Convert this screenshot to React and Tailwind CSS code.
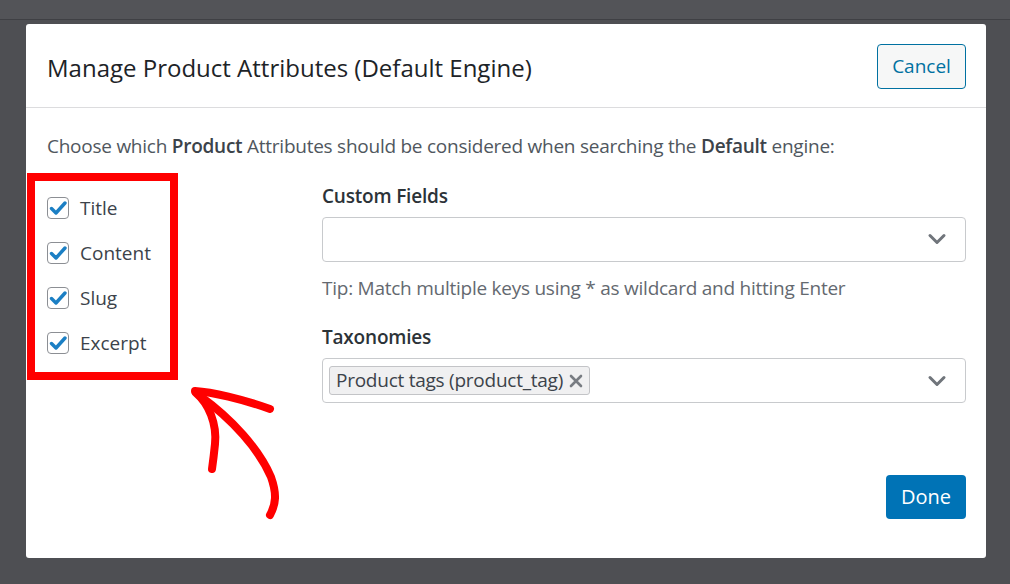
import { ChevronDown } from 'lucide-react';

const font = { fontFamily: '"Open Sans", "Noto Sans", sans-serif' };

const Checkbox = ({ label }) => (
  <label className="flex items-center gap-[11px] h-[45px]">
    <span className="w-[22px] h-[22px] rounded-[4px] border border-[#8c8f94] bg-white flex items-center justify-center">
      <svg width="18" height="18" viewBox="0 0 18 18">
        <path d="M2.5 9.5 L7 14 L16 4" fill="none" stroke="#1b7fc4" strokeWidth="3.4" strokeLinecap="round" strokeLinejoin="round" />
      </svg>
    </span>
    <span className="text-[19px] text-[#3c434a]">{label}</span>
  </label>
);

const SelectBox = ({ children }) => (
  <div className="h-[45px] border border-[#c8cacd] rounded-[4px] flex items-center pl-[6px] pr-[14px] bg-white">
    <div className="flex-1 flex items-center">{children}</div>
    <ChevronDown className="w-[28px] h-[28px] text-[#70757b]" strokeWidth={2.6} />
  </div>
);

const Arrow = () => (
  <svg width="110" height="145" viewBox="180 380 110 145" className="block">
    <g fill="none" stroke="#ff0000" strokeWidth="8" strokeLinecap="round" strokeLinejoin="round">
      <path d="M198 392 C215 393 245 400 273 410" />
      <path d="M199 394 C212 405 220 425 218 445 C217 455 216 463 215 470" />
      <path d="M203 397 C235 420 262 450 274 478 C280 495 279 505 273 516" />
    </g>
  </svg>
);

export default function App() {
  return (
    <div className="w-[1010px] h-[584px] bg-[#4e4f53] relative overflow-hidden" style={font}>
      <div className="h-[20px] border-b border-[#3f4044] bg-[#535458]" />
      <div className="px-[26px] pt-[4px]">
        <div className="bg-white rounded-[3px] w-[960px] h-[534px] flex flex-col">
          <div className="h-[84px] border-b border-[#dcdcde] flex items-center justify-between pl-[21px] pr-[20px]">
            <h1 className="text-[24px] text-[#1d2327] font-normal tracking-[0px] pt-[4px]">
              Manage Product Attributes (Default Engine)
            </h1>
            <button className="h-[45px] w-[89px] mt-[2px] rounded-[4px] border border-[#0071a1] bg-[#f6f7f7] text-[#0071a1] text-[19px]">
              Cancel
            </button>
          </div>
          <div className="flex-1 pl-[21px] pr-[20px] pt-[24px] flex flex-col">
            <p className="text-[19px] text-[#50575e] tracking-[-0.25px]">
              Choose which <b className="font-semibold text-[#3c434a]">Product</b> Attributes should be considered when searching the{' '}
              <b className="font-semibold text-[#3c434a]">Default</b> engine:
            </p>
            <div className="flex mt-[12px]">
              <div className="w-[275px] relative">
                <div className="ml-[-20px] w-[151px] h-[207px] border-[8px] border-[#ff0000] pl-[12px] pt-[5px]">
                  <Checkbox label="Title" />
                  <Checkbox label="Content" />
                  <Checkbox label="Slug" />
                  <Checkbox label="Excerpt" />
                </div>
                <div className="absolute left-[130px] top-[206px]">
                  <Arrow />
                </div>
              </div>
              <div className="flex-1">
                <div className="text-[19px] font-semibold text-[#2c3338] leading-[24px] mt-[11px] tracking-[-0.2px]">Custom Fields</div>
                <div className="mt-[9px]">
                  <SelectBox />
                </div>
                <div className="text-[19px] text-[#646970] mt-[12px] tracking-[-0.25px]">
                  Tip: Match multiple keys using * as wildcard and hitting Enter
                </div>
                <div className="text-[19px] font-semibold text-[#2c3338] leading-[24px] mt-[23px] tracking-[-0.2px]">Taxonomies</div>
                <div className="mt-[9px]">
                  <SelectBox>
                    <span className="h-[29px] flex items-center gap-[6px] px-[6px] bg-[#f0f0f1] border border-[#c3c4c7] rounded-[3px] text-[19px] text-[#3c434a] tracking-[-0.25px]">
                      Product tags (product_tag)
                      <svg width="14" height="14" viewBox="0 0 14 14">
                        <path d="M2 2 L12 12 M12 2 L2 12" stroke="#787c82" strokeWidth="2.6" strokeLinecap="round" />
                      </svg>
                    </span>
                  </SelectBox>
                </div>
                <div className="flex justify-end mt-[72px]">
                  <button className="h-[44px] w-[80px] rounded-[4px] bg-[#0073b6] text-white text-[20px]">Done</button>
                </div>
              </div>
            </div>
          </div>
        </div>
      </div>
    </div>
  );
}
